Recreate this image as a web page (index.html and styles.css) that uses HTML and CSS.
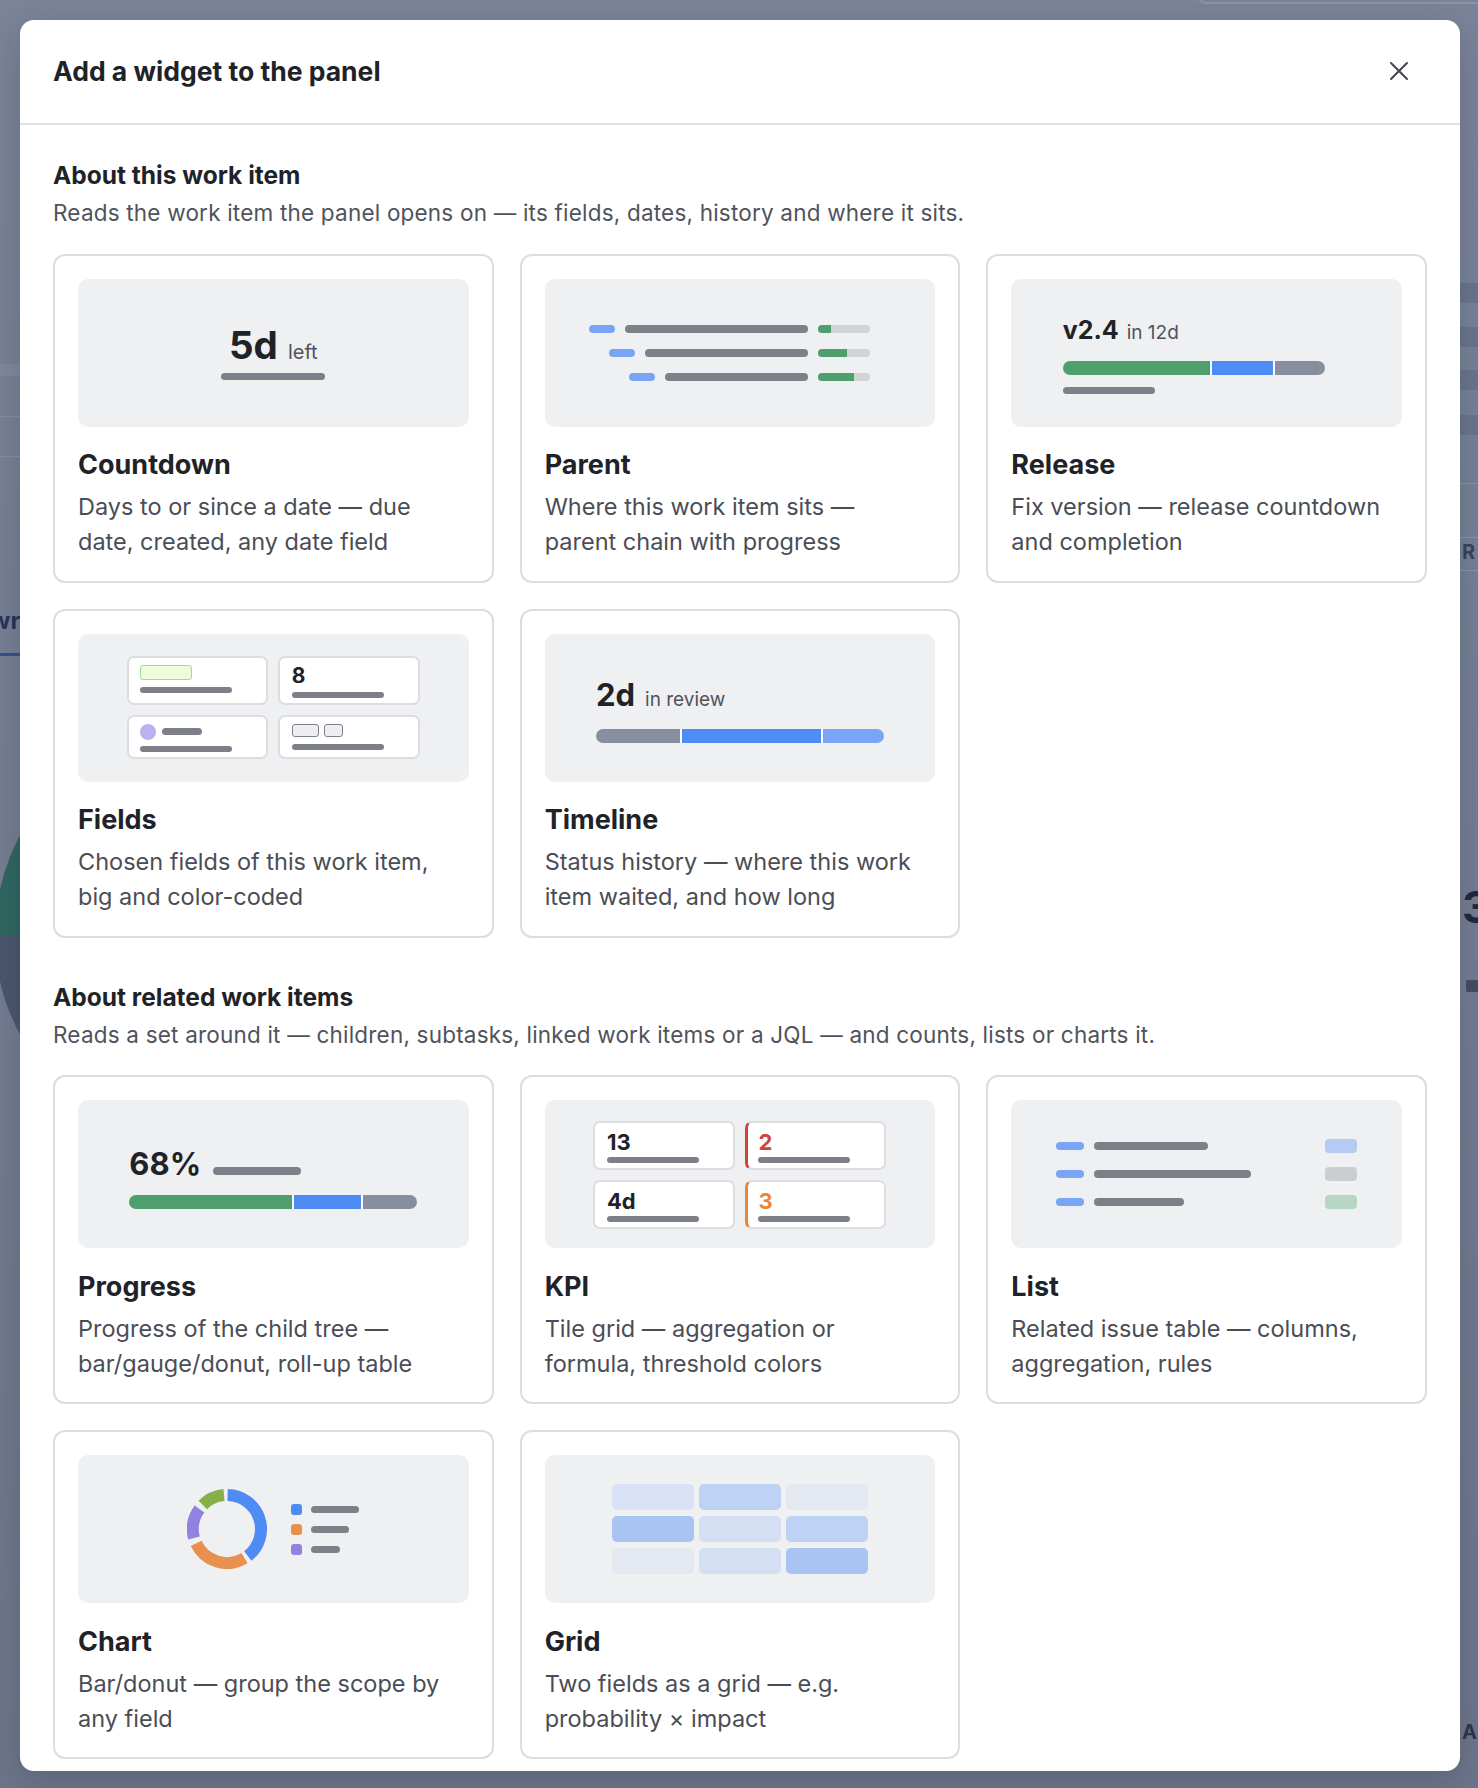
FILE: index.html
```html
<!DOCTYPE html>
<html lang="en">
<head>
<meta charset="utf-8">
<title>Add a widget to the panel</title>
<link rel="stylesheet" href="styles.css">
</head>
<body>
<div class="page-bg" aria-hidden="true">
  <div class="bg-band bg-band--l1"></div>
  <div class="bg-line bg-line--l1"></div>
  <div class="bg-line bg-line--l2"></div>
  <div class="bg-tab">wr</div>
  <div class="bg-tab-line"></div>
  <svg class="bg-ring" width="420" height="420" viewBox="0 0 420 420">
    <path d="M 210 14 A 196 196 0 0 0 14 210" fill="none" stroke="#2f6660" stroke-width="30"/>
    <path d="M 14 210 A 196 196 0 0 0 120 384" fill="none" stroke="#4b556e" stroke-width="30"/>
  </svg>
  <div class="bg-stripe bg-stripe--1"></div>
  <div class="bg-stripe bg-stripe--2"></div>
  <div class="bg-stripe bg-stripe--3"></div>
  <div class="bg-stripe bg-stripe--4"></div>
  <div class="bg-rline bg-rline--1"></div>
  <div class="bg-rline bg-rline--2"></div>
  <div class="bg-rline bg-rline--3"></div>
  <div class="bg-letter bg-letter--r">R</div>
  <div class="bg-letter bg-letter--3">3</div>
  <div class="bg-dark-bar"></div>
  <div class="bg-letter bg-letter--a">A</div>
  <div class="bg-topbox"></div>
</div>

<div class="modal" role="dialog" aria-labelledby="modal-title">
  <header class="modal-header">
    <h1 class="modal-title" id="modal-title">Add a widget to the panel</h1>
    <button class="close" aria-label="Close">
      <svg width="20" height="20" viewBox="0 0 20 20"><path d="M2 2 L18 18 M18 2 L2 18" stroke="#45474e" stroke-width="2.1" stroke-linecap="round" fill="none"/></svg>
    </button>
  </header>

  <div class="modal-body">
    <section class="group">
      <h2 class="group-title">About this work item</h2>
      <p class="group-sub">Reads the work item the panel opens on — its fields, dates, history and where it sits.</p>
      <div class="cards">
        <article class="card">
          <div class="preview">
            <div class="cd">
              <div class="cd-value"><span>5d</span><span class="unit">left</span></div>
              <div class="bar cd-bar"></div>
            </div>
          </div>
          <h3 class="card-title">Countdown</h3>
          <p class="card-desc">Days to or since a date — due<br>date, created, any date field</p>
        </article>

        <article class="card">
          <div class="preview">
            <div class="chain">
              <div class="chain-row">
                <span class="chain-key"></span><span class="chain-name"></span>
                <span class="mini-progress"><span style="width:24%"></span></span>
              </div>
              <div class="chain-row chain-row--2">
                <span class="chain-key"></span><span class="chain-name"></span>
                <span class="mini-progress"><span style="width:56%"></span></span>
              </div>
              <div class="chain-row chain-row--3">
                <span class="chain-key"></span><span class="chain-name"></span>
                <span class="mini-progress"><span style="width:69%"></span></span>
              </div>
            </div>
          </div>
          <h3 class="card-title">Parent</h3>
          <p class="card-desc">Where this work item sits —<br>parent chain with progress</p>
        </article>

        <article class="card">
          <div class="preview">
            <div class="metric metric--release">
              <div class="metric-head"><span class="metric-value">v2.4</span><span class="metric-unit">in 12d</span></div>
              <div class="seg-bar seg-bar--release">
                <span class="seg seg--green" style="flex-grow:147"></span>
                <span class="seg seg--blue" style="flex-grow:61"></span>
                <span class="seg seg--gray" style="flex-grow:50"></span>
              </div>
              <div class="bar release-sub"></div>
            </div>
          </div>
          <h3 class="card-title">Release</h3>
          <p class="card-desc">Fix version — release countdown<br>and completion</p>
        </article>

        <article class="card">
          <div class="preview">
            <div class="tiles">
              <div class="tile">
                <span class="chip-green"></span>
                <span class="bar tile-bar tile-bar--gap7"></span>
              </div>
              <div class="tile">
                <span class="tile-num">8</span>
                <span class="bar tile-bar tile-bar--gap4"></span>
              </div>
              <div class="tile">
                <span class="tile-user"><span class="avatar"></span><span class="bar user-name"></span></span>
                <span class="bar tile-bar tile-bar--gap6"></span>
              </div>
              <div class="tile">
                <span class="tile-tags"><span class="tag tag--wide"></span><span class="tag"></span></span>
                <span class="bar tile-bar tile-bar--gap7"></span>
              </div>
            </div>
          </div>
          <h3 class="card-title">Fields</h3>
          <p class="card-desc">Chosen fields of this work item,<br>big and color-coded</p>
        </article>

        <article class="card">
          <div class="preview">
            <div class="metric metric--timeline">
              <div class="metric-head"><span class="metric-value">2d</span><span class="metric-unit">in review</span></div>
              <div class="seg-bar">
                <span class="seg seg--gray" style="flex-grow:84"></span>
                <span class="seg seg--blue" style="flex-grow:139"></span>
                <span class="seg seg--lightblue" style="flex-grow:61"></span>
              </div>
            </div>
          </div>
          <h3 class="card-title">Timeline</h3>
          <p class="card-desc">Status history — where this work<br>item waited, and how long</p>
        </article>
      </div>
    </section>

    <section class="group">
      <h2 class="group-title">About related work items</h2>
      <p class="group-sub">Reads a set around it — children, subtasks, linked work items or a JQL — and counts, lists or charts it.</p>
      <div class="cards">
        <article class="card">
          <div class="preview">
            <div class="metric metric--progress">
              <div class="metric-head"><span class="metric-value">68%</span><span class="bar progress-label"></span></div>
              <div class="seg-bar">
                <span class="seg seg--green" style="flex-grow:162"></span>
                <span class="seg seg--blue" style="flex-grow:67"></span>
                <span class="seg seg--gray" style="flex-grow:54"></span>
              </div>
            </div>
          </div>
          <h3 class="card-title">Progress</h3>
          <p class="card-desc">Progress of the child tree —<br>bar/gauge/donut, roll-up table</p>
        </article>

        <article class="card">
          <div class="preview">
            <div class="tiles tiles--kpi">
              <div class="tile">
                <span class="tile-num">13</span>
                <span class="bar tile-bar tile-bar--gap4"></span>
              </div>
              <div class="tile tile--red">
                <span class="tile-num">2</span>
                <span class="bar tile-bar tile-bar--gap4"></span>
              </div>
              <div class="tile">
                <span class="tile-num">4d</span>
                <span class="bar tile-bar tile-bar--gap4"></span>
              </div>
              <div class="tile tile--orange">
                <span class="tile-num">3</span>
                <span class="bar tile-bar tile-bar--gap4"></span>
              </div>
            </div>
          </div>
          <h3 class="card-title">KPI</h3>
          <p class="card-desc">Tile grid — aggregation or<br>formula, threshold colors</p>
        </article>

        <article class="card">
          <div class="preview">
            <div class="list">
              <div class="list-row"><span class="list-key"></span><span class="list-name" style="width:114px"></span><span class="list-chip list-chip--blue"></span></div>
              <div class="list-row"><span class="list-key"></span><span class="list-name" style="width:157px"></span><span class="list-chip list-chip--gray"></span></div>
              <div class="list-row"><span class="list-key"></span><span class="list-name" style="width:90px"></span><span class="list-chip list-chip--green"></span></div>
            </div>
          </div>
          <h3 class="card-title">List</h3>
          <p class="card-desc">Related issue table — columns,<br>aggregation, rules</p>
        </article>

        <article class="card">
          <div class="preview">
            <div class="chart">
              <svg class="donut" width="80" height="80" viewBox="0 0 80 80">
                <path d="M 40.6 6 A 34 34 0 0 1 60.8 66.9" fill="none" stroke="#4f8bf5" stroke-width="12"/>
                <path d="M 57.5 69.2 A 34 34 0 0 1 9.2 54.4" fill="none" stroke="#e8904f" stroke-width="12"/>
                <path d="M 7.0 49.0 A 34 34 0 0 1 12.5 20.0" fill="none" stroke="#9182e0" stroke-width="12"/>
                <path d="M 15.8 16.0 A 34 34 0 0 1 37.0 6.1" fill="none" stroke="#86b04a" stroke-width="12"/>
              </svg>
              <div class="legend">
                <div class="legend-row"><span class="dot dot--blue"></span><span class="bar legend-bar" style="width:48px"></span></div>
                <div class="legend-row"><span class="dot dot--orange"></span><span class="bar legend-bar" style="width:38px"></span></div>
                <div class="legend-row"><span class="dot dot--purple"></span><span class="bar legend-bar" style="width:29px"></span></div>
              </div>
            </div>
          </div>
          <h3 class="card-title">Chart</h3>
          <p class="card-desc">Bar/donut — group the scope by<br>any field</p>
        </article>

        <article class="card">
          <div class="preview">
            <div class="matrix">
              <span class="cell cell--2"></span><span class="cell cell--3"></span><span class="cell cell--0"></span>
              <span class="cell cell--4"></span><span class="cell cell--1"></span><span class="cell cell--3"></span>
              <span class="cell cell--0"></span><span class="cell cell--1"></span><span class="cell cell--4"></span>
            </div>
          </div>
          <h3 class="card-title">Grid</h3>
          <p class="card-desc">Two fields as a grid — e.g.<br>probability × impact</p>
        </article>
      </div>
    </section>
  </div>
</div>
</body>
</html>
```

FILE: styles.css
```css
* { box-sizing: border-box; }

html, body { margin: 0; padding: 0; }

body {
  width: 1478px;
  height: 1788px;
  overflow: hidden;
  position: relative;
  background: linear-gradient(180deg, #7a8397 0%, #737c91 50%, #6c7589 100%);
  font-family: Inter, "Noto Sans", "Liberation Sans", sans-serif;
  color: #1f2328;
}

/* ---------- dimmed page behind the dialog ---------- */
.page-bg { position: absolute; inset: 0; }
.bg-band { position: absolute; left: 0; width: 22px; background: #7f889c; }
.bg-band--l1 { top: 364px; height: 12px; }
.bg-line { position: absolute; left: 0; width: 22px; height: 1px; background: #858ea2; }
.bg-line--l1 { top: 416px; }
.bg-line--l2 { top: 456px; }
.bg-tab {
  position: absolute; left: -10px; top: 606px;
  font-size: 24px; font-weight: 700; color: #27345d;
}
.bg-tab-line { position: absolute; left: 0; top: 653px; width: 20px; height: 3px; background: #34508f; }
.bg-ring { position: absolute; left: -4px; top: 725px; }
.bg-stripe { position: absolute; left: 1458px; width: 20px; height: 20px; background: #6b7488; }
.bg-stripe--1 { top: 283px; }
.bg-stripe--2 { top: 327px; }
.bg-stripe--3 { top: 370px; }
.bg-stripe--4 { top: 415px; }
.bg-rline { position: absolute; left: 1458px; width: 20px; height: 1px; background: #8a93a6; }
.bg-rline--1 { top: 483px; }
.bg-rline--2 { top: 537px; }
.bg-rline--3 { top: 570px; }
.bg-letter { position: absolute; left: 1462px; font-weight: 700; color: #3a4358; }
.bg-letter--r { top: 540px; font-size: 20px; }
.bg-letter--3 { top: 880px; font-size: 44px; color: #22283a; }
.bg-letter--a { top: 1720px; font-size: 20px; color: #2f3648; }
.bg-dark-bar { position: absolute; left: 1466px; top: 980px; width: 14px; height: 12px; background: #454c60; border-radius: 2px; }
.bg-topbox {
  position: absolute; left: 1198px; top: -20px; width: 320px; height: 24px;
  border: 2px solid #8b94a7; border-radius: 8px;
}

/* ---------- dialog ---------- */
.modal {
  position: absolute;
  left: 20px;
  top: 19.5px;
  width: 1440px;
  height: 1751px;
  background: #fff;
  border-radius: 14px;
  overflow: hidden;
  display: flex;
  flex-direction: column;
  box-shadow: 0 10px 30px rgba(20, 25, 40, 0.18);
}

.modal-header {
  flex: none;
  height: 105px;
  display: flex;
  align-items: center;
  justify-content: space-between;
  padding: 0 33px;
  border-bottom: 2px solid #e2e3e6;
}

.modal-title {
  margin: 0;
  font-size: 26.5px;
  line-height: 32px;
  font-weight: 700;
  color: #1f2328;
}

.close {
  width: 36px;
  height: 36px;
  margin-right: 10px;
  padding: 0;
  border: 0;
  background: none;
  display: flex;
  align-items: center;
  justify-content: center;
}

.modal-body {
  flex: 1;
  overflow: hidden;
  padding: 36.5px 33px 33px;
}

.group + .group { margin-top: 45px; }

.group-title {
  margin: 0;
  font-size: 24.5px;
  line-height: 28px;
  font-weight: 700;
  color: #1f2328;
}

.group-sub {
  margin: 9px 0 0;
  font-size: 22.5px;
  line-height: 30px;
  letter-spacing: 0.2px;
  color: #50535b;
}

.cards {
  display: grid;
  grid-template-columns: repeat(3, 1fr);
  gap: 26px;
  margin-top: 25.5px;
}

.card {
  border: 2px solid #dcdde1;
  border-radius: 12px;
  padding: 23px 23px 21.5px;
  background: #fff;
}

.preview {
  height: 148px;
  border-radius: 10px;
  background: #eff0f2;
  display: flex;
  align-items: center;
  justify-content: center;
}

.card-title {
  margin: 22.5px 0 0;
  font-size: 27px;
  line-height: 32px;
  font-weight: 700;
  color: #1f2328;
}

.card-desc {
  margin: 8px 0 0;
  font-size: 23.5px;
  line-height: 35px;
  color: #4a4d55;
}

/* ---------- shared preview parts ---------- */
.bar { display: block; background: #7e8089; border-radius: 4px; }

/* Countdown */
.cd { display: flex; flex-direction: column; align-items: center; }
.cd-value {
  display: flex;
  align-items: baseline;
  font-size: 38.5px;
  line-height: 40px;
  font-weight: 700;
  color: #1f2328;
}
.unit { font-size: 20px; font-weight: 400; color: #50535b; margin-left: 10px; }
.cd-bar { width: 104px; height: 7px; margin-top: 1px; }

/* Parent chain */
.chain {
  width: 100%;
  display: flex;
  flex-direction: column;
  gap: 16px;
  padding: 0 65px 0 44px;
}
.chain-row { display: flex; align-items: center; gap: 10px; height: 8px; }
.chain-row--2 { margin-left: 20px; }
.chain-row--3 { margin-left: 40px; }
.chain-key { flex: none; width: 26px; height: 8px; border-radius: 4px; background: #78a5f5; }
.chain-name { flex: 1; height: 8px; border-radius: 4px; background: #7e8089; }
.mini-progress {
  flex: none;
  width: 52px;
  height: 8px;
  border-radius: 4px;
  background: #d3d4d6;
  overflow: hidden;
}
.mini-progress span { display: block; height: 100%; background: #4e9e6e; }

/* Metric with segmented bar (Release, Timeline, Progress) */
.metric { width: 288px; }
.metric-head { display: flex; align-items: baseline; }
.metric-value { font-weight: 700; color: #1f2328; }
.metric-unit { margin-left: 9px; font-size: 19px; color: #50535b; }

.metric--release { margin-top: 4px; }
.metric--release .metric-head { line-height: 30px; }
.metric--release .metric-value { font-size: 25px; }
.metric--release .metric-unit { margin-left: 8px; }

.metric--timeline { margin-top: 7px; }
.metric--timeline .metric-head { line-height: 32px; }
.metric--timeline .metric-value { font-size: 31px; }
.metric--timeline .metric-unit { margin-left: 10px; }

.metric--progress { margin-top: 8px; }
.metric--progress .metric-head { line-height: 34px; align-items: flex-end; }
.metric--progress .metric-value { font-size: 31px; }

.seg-bar {
  display: flex;
  height: 14px;
  border-radius: 7px;
  overflow: hidden;
  margin-top: 12.5px;
}
.metric--timeline .seg-bar { margin-top: 12.5px; }
.metric--progress .seg-bar { margin-top: 14.5px; }
.seg { display: block; height: 100%; flex-basis: 0; }
.seg + .seg { border-left: 2px solid #fff; }
.seg--green { background: #4e9e6e; }
.seg--blue { background: #4f8bf5; }
.seg--gray { background: #878f9f; }
.seg--lightblue { background: #78a5f5; }
.seg-bar--release { width: 262px; }
.release-sub { width: 92px; height: 7px; margin-top: 12px; }

.progress-label { width: 88px; height: 8px; margin-left: 12px; margin-bottom: 6px; }

/* Tiles (Fields, KPI) */
.tiles {
  display: grid;
  grid-template-columns: 141.5px 141.5px;
  gap: 10px;
}
.tile {
  display: flex;
  flex-direction: column;
  align-items: flex-start;
  background: #fff;
  border: 2px solid #dcdde1;
  border-radius: 7px;
  padding: 7px 12px 5px 11.5px;
}
.tile-bar { width: 92px; height: 6px; }
.tile-bar--gap4 { margin-top: 4.5px; }
.tile-bar--gap6 { margin-top: 6px; }
.tile-bar--gap7 { margin-top: 7px; }
.chip-green {
  width: 52px;
  height: 15px;
  border-radius: 3px;
  background: #eefcdc;
  border: 1.5px solid #a6d79d;
}
.tile-num { font-size: 21px; line-height: 22px; font-weight: 700; color: #1f2328; }
.tile-user { display: flex; align-items: center; height: 16px; }
.avatar { width: 16px; height: 16px; border-radius: 50%; background: #bbb3f0; }
.user-name { width: 40px; height: 7px; margin-left: 6px; }
.tile-tags { display: flex; gap: 5px; height: 13px; }
.tag {
  width: 19px;
  height: 13px;
  border: 1.5px solid #7e8089;
  border-radius: 3px;
  background: #eceef1;
}
.tag--wide { width: 27px; }

.tiles--kpi { margin-top: 2px; }
.tiles--kpi .tile { padding-top: 7.5px; }
.tiles--kpi .tile-num { font-size: 22px; }
.tile--red { border-left: 3px solid #d0443a; padding-left: 10.5px; }
.tile--red .tile-num { color: #d0443a; }
.tile--orange { border-left: 3px solid #e8873a; padding-left: 10.5px; }
.tile--orange .tile-num { color: #e8873a; }

/* List */
.list {
  width: 100%;
  padding: 0 45px;
  display: flex;
  flex-direction: column;
  gap: 14px;
}
.list-row { display: flex; align-items: center; height: 14px; }
.list-key { width: 28px; height: 8px; border-radius: 4px; background: #78a5f5; }
.list-name { height: 8px; margin-left: 10px; border-radius: 4px; background: #7e8089; }
.list-chip { margin-left: auto; width: 32px; height: 14px; border-radius: 4px; }
.list-chip--blue { background: #b5cbf3; }
.list-chip--gray { background: #cbcdd3; }
.list-chip--green { background: #b8d6c5; }

/* Chart */
.chart { display: flex; align-items: center; }
.donut { display: block; }
.legend { margin-left: 24px; display: flex; flex-direction: column; gap: 9px; }
.legend-row { display: flex; align-items: center; height: 11px; }
.dot { width: 11px; height: 11px; border-radius: 3px; }
.dot--blue { background: #4f8bf5; }
.dot--orange { background: #e8904f; }
.dot--purple { background: #9182e0; }
.legend-bar { height: 7px; margin-left: 9px; }

/* Grid matrix */
.matrix {
  display: grid;
  grid-template-columns: repeat(3, 82px);
  grid-auto-rows: 26px;
  gap: 6px 5px;
}
.cell { display: block; border-radius: 5px; }
.cell--0 { background: #e3e8f1; }
.cell--1 { background: #d4dff4; }
.cell--2 { background: #d8e2f4; }
.cell--3 { background: #bdd2f5; }
.cell--4 { background: #a9c4f3; }
```
